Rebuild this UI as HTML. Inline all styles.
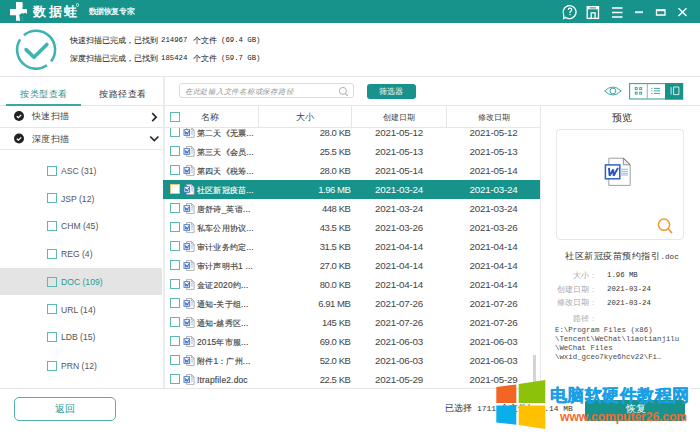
<!DOCTYPE html>
<html><head><meta charset="utf-8">
<style>
*{margin:0;padding:0;box-sizing:border-box}
html,body{width:700px;height:436px;overflow:hidden;background:#fff;font-family:"Liberation Sans",sans-serif;color:#444}
.a{position:absolute}
.t{white-space:nowrap;line-height:1}
.hl{background:#e4e4e4}
.cb{position:absolute;width:10px;height:10px;border:1px solid #5cb8b0;background:#fff}
.row{position:absolute;left:164px;width:376px;height:19px}
.row .cb{left:6px;top:4.2px}
.row .ic{position:absolute;left:18.5px;top:4px}
.row .nm{position:absolute;left:33px;top:6.2px;font-size:8.4px;letter-spacing:0.2px;color:#444;-webkit-text-stroke:0.15px #444}
.row.sel .nm{-webkit-text-stroke:0.15px #fff}
.row .sz{position:absolute;right:189.6px;top:5.3px;font-size:9.5px;letter-spacing:-0.45px;color:#444}
.row .d1{position:absolute;left:199px;width:72px;text-align:center;top:4.7px;font-size:9.8px;letter-spacing:-0.21px;color:#444}
.row .d2{position:absolute;left:293.5px;width:72px;text-align:center;top:4.7px;font-size:9.8px;letter-spacing:-0.21px;color:#444}
.row.sel{background:#17938c;height:18.7px;left:163px;width:377px;padding-left:1px}
.row.sel > *{margin-left:1px}
.row.sel .nm,.row.sel .sz,.row.sel .d1,.row.sel .d2{color:#fff}
.vl{position:absolute;background:#e6e6e6;width:1px}
.hz{position:absolute;background:#e6e6e6;height:1px}
.mono{font-family:"Liberation Mono",monospace}
</style></head><body>
<!-- header -->
<div class="a" style="left:0;top:0;width:700px;height:23px;background:#17938c"></div>
<svg class="a" style="left:9px;top:1px" width="20" height="21" viewBox="0 0 20 21">
 <path d="M7 1.1h6.4v6.9h4.6v6.2h-4.6v5.6H7v-5.6H1V8h6z" fill="#fff"/>
 <path d="M11.4 21l-1.2-7.1 2.8-1.9 1.6.8 1.7-1.4 2.8 2.8v1h-5.5v5.8z" fill="#17938c"/>
 <path d="M13.6 2.5v3.8" stroke="#bfe3df" stroke-width="0.8"/>
</svg>
<div class="a t" style="left:33px;top:5px;font-size:13.2px;font-weight:bold;color:#fff;letter-spacing:2.6px">数据蛙</div>
<div class="a" style="left:75.5px;top:3px;width:3.5px;height:3.5px;border-radius:50%;border:0.8px solid #bfe"></div>
<div class="a t" style="left:88.5px;top:8.3px;font-size:8.2px;letter-spacing:-0.35px;color:#fff;-webkit-text-stroke:0.2px #fff">数据恢复专家</div>
<svg class="a" style="left:560px;top:3px" width="130" height="18" viewBox="560 3 130 18">
 <g fill="none" stroke="#fff" stroke-width="1.3">
  <path d="M565.6 17.2 A6.5 6.5 0 1 0 563.6 14.6 L563.7 18.6 Z"/>
  <path d="M568.3 9.9q0-1.8 1.7-1.8t1.7 1.7q0 1-1 1.5q-.7.4-.7 1.3v.5" stroke-width="1.2"/>
  <rect x="587.2" y="6.7" width="11.3" height="11.7"/>
  <path d="M591.2 18.4v-5.6h3.9v5.6"/>
 </g>
 <path d="M587.2 6.3h11.3v3h-11.3z" fill="#fff"/>
 <path d="M589.6 7.4h6.5v1h-6.5z" fill="#17938c"/>
 <circle cx="570" cy="14.4" r="0.75" fill="#fff"/>
 <g fill="none" stroke="#fff" stroke-width="1.3">
  <path d="M612 8h10.5M612 12.5h10.5M612 17h10.5"/>
  <path d="M656.5 10h8.5v5h-8.5z" />
  <path d="M678.5 8.3l8 7.7M686.5 8.3l-8 7.7" stroke-width="1.4"/>
 </g>
 <path d="M656.5 10.3h8.5" stroke="#fff" stroke-width="1.8"/>
 <path d="M635 12.2h8" stroke="#d8eeee" stroke-width="2"/>
</svg>

<!-- scan info -->
<svg class="a" style="left:13px;top:27px" width="46" height="46" viewBox="0 0 46 46">
 <g fill="none" stroke="#3fb3b1" stroke-width="2.6">
  <path d="M34 38.26 A19 19 0 0 1 7.17 12.35"/>
  <path d="M10.89 8.15 A19 19 0 0 1 38.07 34.4"/>
 </g>
 <path d="M13.1 22.6l7.9 7.7 12.9-12.9" fill="none" stroke="#3fb3b1" stroke-width="3.6" stroke-linecap="round" stroke-linejoin="round"/>
</svg>
<div class="a t" style="left:70px;top:36.2px;font-size:8.3px;color:#2a2a2a;-webkit-text-stroke:0.06px #2a2a2a">快速扫描已完成，已找到</div>
<div class="a t mono" style="left:161px;top:37px;font-size:7.3px;color:#222">214967</div>
<div class="a t" style="left:193px;top:36.2px;font-size:8.3px;color:#2a2a2a;-webkit-text-stroke:0.06px #2a2a2a">个文件</div>
<div class="a t mono" style="left:221px;top:37px;font-size:7.3px;color:#222">(69.4 GB)</div>
<div class="a t" style="left:70px;top:54.2px;font-size:8.3px;color:#2a2a2a;-webkit-text-stroke:0.06px #2a2a2a">深度扫描已完成，已找到</div>
<div class="a t mono" style="left:161px;top:55px;font-size:7.3px;color:#222">185424</div>
<div class="a t" style="left:193px;top:54.2px;font-size:8.3px;color:#2a2a2a;-webkit-text-stroke:0.06px #2a2a2a">个文件</div>
<div class="a t mono" style="left:221px;top:55px;font-size:7.3px;color:#222">(59.7 GB)</div>

<!-- main lines -->
<div class="hz" style="left:0;top:76px;width:700px"></div>
<div class="hz" style="left:0;top:105px;width:700px"></div>
<div class="hz" style="left:164px;top:127px;width:376px"></div>
<div class="hz" style="left:0;top:127px;width:164px"></div>
<div class="hz" style="left:0;top:148.5px;width:164px"></div>
<div class="hz" style="left:0;top:387.5px;width:700px"></div>
<div class="vl" style="left:163px;top:76px;height:312px;width:2px;background:#ebebeb"></div>
<div class="vl" style="left:540px;top:105px;height:283px"></div>

<!-- tabs -->
<div class="a t" style="left:20px;top:89.3px;font-size:9.4px;letter-spacing:0.5px;color:#1f918b">按类型查看</div>
<div class="a t" style="left:99px;top:89.3px;font-size:9.4px;letter-spacing:0.5px;color:#333">按路径查看</div>
<div class="a" style="left:6px;top:104px;width:75px;height:2px;background:#3aa9a4"></div>

<!-- left scan rows -->
<svg class="a" style="left:13px;top:110px" width="12" height="40" viewBox="0 0 12 40">
 <circle cx="6" cy="6" r="5" fill="#222"/><path d="M3.8 6.2l1.6 1.5 2.8-2.8" fill="none" stroke="#fff" stroke-width="1.3"/>
 <circle cx="6" cy="28.5" r="5" fill="#222"/><path d="M3.8 28.7l1.6 1.5 2.8-2.8" fill="none" stroke="#fff" stroke-width="1.3"/>
</svg>
<div class="a t" style="left:32px;top:112px;font-size:9.3px;letter-spacing:0.3px;color:#444">快速扫描</div>
<div class="a t" style="left:32px;top:134.5px;font-size:9.3px;letter-spacing:0.3px;color:#444">深度扫描</div>
<svg class="a" style="left:148px;top:110px" width="12" height="40" viewBox="0 0 12 40">
 <path d="M4.2 3.2l4 4-4 4" fill="none" stroke="#2a2a2a" stroke-width="1.7"/>
 <path d="M2.2 26.5l4.1 4.1 4.1-4.1" fill="none" stroke="#2a2a2a" stroke-width="1.7"/>
</svg>

<!-- file type list -->
<div class="a hl" style="left:0;top:268px;width:162px;height:27px"></div>
<div class="cb" style="left:47px;top:165.5px;"></div><div class="a t" style="left:61px;top:166.8px;font-size:8.6px;color:#555">ASC (31)</div>
<div class="cb" style="left:47px;top:193.3px;"></div><div class="a t" style="left:61px;top:194.60000000000002px;font-size:8.6px;color:#555">JSP (12)</div>
<div class="cb" style="left:47px;top:221px;"></div><div class="a t" style="left:61px;top:222.3px;font-size:8.6px;color:#555">CHM (45)</div>
<div class="cb" style="left:47px;top:248.8px;"></div><div class="a t" style="left:61px;top:250.10000000000002px;font-size:8.6px;color:#555">REG (4)</div>
<div class="cb" style="left:47px;top:276.8px;background:transparent;"></div><div class="a t" style="left:61px;top:278.1px;font-size:8.6px;color:#2a9a94">DOC (109)</div>
<div class="cb" style="left:47px;top:304.3px;"></div><div class="a t" style="left:61px;top:305.6px;font-size:8.6px;color:#555">URL (14)</div>
<div class="cb" style="left:47px;top:332px;"></div><div class="a t" style="left:61px;top:333.3px;font-size:8.6px;color:#555">LDB (15)</div>
<div class="cb" style="left:47px;top:360.5px;"></div><div class="a t" style="left:61px;top:361.8px;font-size:8.6px;color:#555">PRN (12)</div>

<!-- search & filter -->
<div class="a" style="left:179px;top:83.3px;width:174.5px;height:15.2px;border:1px solid #dcdcdc;border-radius:3px"></div>
<div class="a t" style="left:184.8px;top:88.2px;font-size:7.4px;letter-spacing:0.75px;color:#999;font-style:italic">在此处输入文件名称或保存路径</div>
<svg class="a" style="left:338px;top:86px" width="11" height="11" viewBox="0 0 11 11"><circle cx="4.9" cy="4.9" r="3.5" fill="none" stroke="#b0b0b0" stroke-width="1"/><path d="M7.5 7.5l2.3 2.3" stroke="#b0b0b0" stroke-width="1.1"/></svg>
<div class="a" style="left:366.8px;top:83.6px;width:49.3px;height:15px;background:#17938c;border-radius:3px"></div>
<div class="a t" style="left:378.8px;top:87.5px;font-size:8px;color:#fff">筛选器</div>

<!-- right toolbar -->
<svg class="a" style="left:602px;top:82px" width="84" height="19" viewBox="602 82 84 19">
 <path d="M604.6 91q8.3-8 16.6 0q-8.3 8-16.6 0z" fill="none" stroke="#3aa9a4" stroke-width="1"/>
 <circle cx="612.9" cy="91" r="2.9" fill="none" stroke="#3aa9a4" stroke-width="1"/>
 <rect x="629.6" y="83.6" width="53" height="15.4" fill="#fff" stroke="#3aa59f" stroke-width="1.1"/>
 <rect x="665" y="83.1" width="18.1" height="16.4" fill="#17938c"/>
 <path d="M647.3 83.5v15.5" stroke="#7cc4be" stroke-width="1.1"/>
 <g fill="none" stroke="#3a9e98" stroke-width="0.9"><rect x="635.2" y="87.6" width="2" height="2"/><rect x="639.7" y="87.6" width="2" height="2"/><rect x="635.2" y="92.1" width="2" height="2"/><rect x="639.7" y="92.1" width="2" height="2"/></g>
 <path d="M651.2 88.4h1.2M653.9 88.4h6.2M651.2 90.9h1.2M653.9 90.9h6.2M651.2 93.4h1.2M653.9 93.4h6.2" stroke="#2a9a94" stroke-width="0.9"/>
 <path d="M671.1 87v7.6M673.6 87h5.3v7.6h-5.3z" fill="none" stroke="#e8f6f4" stroke-width="0.9"/>
</svg>

<!-- table header -->
<div class="cb" style="left:170px;top:111.8px"></div>
<div class="a t" style="left:201px;top:112.5px;font-size:8.8px;color:#444">名称</div>
<div class="vl" style="left:257.5px;top:105px;height:22px"></div>
<div class="a t" style="left:295.5px;top:112.5px;font-size:8.8px;color:#444">大小</div>
<div class="vl" style="left:351px;top:105px;height:22px"></div>
<div class="a t" style="left:383px;top:112.8px;font-size:8.4px;color:#444">创建日期</div>
<div class="vl" style="left:446px;top:105px;height:22px"></div>
<div class="a t" style="left:477.5px;top:112.8px;font-size:8.4px;color:#444">修改日期</div>

<!-- rows -->
<div class="a" style="left:163px;top:127.5px;width:377px;height:260px;overflow:hidden">
 <div class="a" style="left:-163px;top:-127.5px;width:700px;height:436px">
<div class="row" style="top:123px"><div class="cb"></div><svg class="ic" width="12" height="12" viewBox="0 0 12 12"><path d="M3.6 .6h5l2.5 2.5v7.3h-7.5z" fill="#fff" stroke="#a0a0a0" stroke-width=".8"/><path d="M8.6 .6v2.5h2.5" fill="none" stroke="#999" stroke-width=".7"/><rect x="1" y="2.7" width="5.6" height="5.6" fill="#fff" stroke="#3d70cc" stroke-width=".9"/><path d="M2 3.9l.9 3.4.9-2.2.9 2.2.9-3.4" fill="none" stroke="#2a5ec0" stroke-width=".9"/><path d="M7.8 4.6h2.2M7.8 5.9h2.2M7.8 7.2h2.2" stroke="#8ab2e6" stroke-width=".6"/></svg><div class="nm t">第二天《无票...</div><div class="sz t">28.0 KB</div><div class="d1 t">2021-05-12</div><div class="d2 t">2021-05-12</div></div>
<div class="row" style="top:142px"><div class="cb"></div><svg class="ic" width="12" height="12" viewBox="0 0 12 12"><path d="M3.6 .6h5l2.5 2.5v7.3h-7.5z" fill="#fff" stroke="#a0a0a0" stroke-width=".8"/><path d="M8.6 .6v2.5h2.5" fill="none" stroke="#999" stroke-width=".7"/><rect x="1" y="2.7" width="5.6" height="5.6" fill="#fff" stroke="#3d70cc" stroke-width=".9"/><path d="M2 3.9l.9 3.4.9-2.2.9 2.2.9-3.4" fill="none" stroke="#2a5ec0" stroke-width=".9"/><path d="M7.8 4.6h2.2M7.8 5.9h2.2M7.8 7.2h2.2" stroke="#8ab2e6" stroke-width=".6"/></svg><div class="nm t">第三天《会员...</div><div class="sz t">25.5 KB</div><div class="d1 t">2021-05-13</div><div class="d2 t">2021-05-13</div></div>
<div class="row" style="top:161px"><div class="cb"></div><svg class="ic" width="12" height="12" viewBox="0 0 12 12"><path d="M3.6 .6h5l2.5 2.5v7.3h-7.5z" fill="#fff" stroke="#a0a0a0" stroke-width=".8"/><path d="M8.6 .6v2.5h2.5" fill="none" stroke="#999" stroke-width=".7"/><rect x="1" y="2.7" width="5.6" height="5.6" fill="#fff" stroke="#3d70cc" stroke-width=".9"/><path d="M2 3.9l.9 3.4.9-2.2.9 2.2.9-3.4" fill="none" stroke="#2a5ec0" stroke-width=".9"/><path d="M7.8 4.6h2.2M7.8 5.9h2.2M7.8 7.2h2.2" stroke="#8ab2e6" stroke-width=".6"/></svg><div class="nm t">第四天《税筹...</div><div class="sz t">28.0 KB</div><div class="d1 t">2021-05-14</div><div class="d2 t">2021-05-14</div></div>
<div class="row sel" style="top:180px"><div class="cb" style="border-color:#f3c27a"></div><svg class="ic" width="12" height="12" viewBox="0 0 12 12"><path d="M3.6 .6h5l2.5 2.5v7.3h-7.5z" fill="#fff" stroke="#a0a0a0" stroke-width=".8"/><path d="M8.6 .6v2.5h2.5" fill="none" stroke="#999" stroke-width=".7"/><rect x="1" y="2.7" width="5.6" height="5.6" fill="#fff" stroke="#3d70cc" stroke-width=".9"/><path d="M2 3.9l.9 3.4.9-2.2.9 2.2.9-3.4" fill="none" stroke="#2a5ec0" stroke-width=".9"/><path d="M7.8 4.6h2.2M7.8 5.9h2.2M7.8 7.2h2.2" stroke="#8ab2e6" stroke-width=".6"/></svg><div class="nm t">社区新冠疫苗...</div><div class="sz t">1.96 MB</div><div class="d1 t">2021-03-24</div><div class="d2 t">2021-03-24</div></div>
<div class="row" style="top:199px"><div class="cb"></div><svg class="ic" width="12" height="12" viewBox="0 0 12 12"><path d="M3.6 .6h5l2.5 2.5v7.3h-7.5z" fill="#fff" stroke="#a0a0a0" stroke-width=".8"/><path d="M8.6 .6v2.5h2.5" fill="none" stroke="#999" stroke-width=".7"/><rect x="1" y="2.7" width="5.6" height="5.6" fill="#fff" stroke="#3d70cc" stroke-width=".9"/><path d="M2 3.9l.9 3.4.9-2.2.9 2.2.9-3.4" fill="none" stroke="#2a5ec0" stroke-width=".9"/><path d="M7.8 4.6h2.2M7.8 5.9h2.2M7.8 7.2h2.2" stroke="#8ab2e6" stroke-width=".6"/></svg><div class="nm t">唐舒诗_英语...</div><div class="sz t">448 KB</div><div class="d1 t">2021-03-24</div><div class="d2 t">2021-03-24</div></div>
<div class="row" style="top:218px"><div class="cb"></div><svg class="ic" width="12" height="12" viewBox="0 0 12 12"><path d="M3.6 .6h5l2.5 2.5v7.3h-7.5z" fill="#fff" stroke="#a0a0a0" stroke-width=".8"/><path d="M8.6 .6v2.5h2.5" fill="none" stroke="#999" stroke-width=".7"/><rect x="1" y="2.7" width="5.6" height="5.6" fill="#fff" stroke="#3d70cc" stroke-width=".9"/><path d="M2 3.9l.9 3.4.9-2.2.9 2.2.9-3.4" fill="none" stroke="#2a5ec0" stroke-width=".9"/><path d="M7.8 4.6h2.2M7.8 5.9h2.2M7.8 7.2h2.2" stroke="#8ab2e6" stroke-width=".6"/></svg><div class="nm t">私车公用协议...</div><div class="sz t">43.5 KB</div><div class="d1 t">2021-03-26</div><div class="d2 t">2021-03-26</div></div>
<div class="row" style="top:237px"><div class="cb"></div><svg class="ic" width="12" height="12" viewBox="0 0 12 12"><path d="M3.6 .6h5l2.5 2.5v7.3h-7.5z" fill="#fff" stroke="#a0a0a0" stroke-width=".8"/><path d="M8.6 .6v2.5h2.5" fill="none" stroke="#999" stroke-width=".7"/><rect x="1" y="2.7" width="5.6" height="5.6" fill="#fff" stroke="#3d70cc" stroke-width=".9"/><path d="M2 3.9l.9 3.4.9-2.2.9 2.2.9-3.4" fill="none" stroke="#2a5ec0" stroke-width=".9"/><path d="M7.8 4.6h2.2M7.8 5.9h2.2M7.8 7.2h2.2" stroke="#8ab2e6" stroke-width=".6"/></svg><div class="nm t">审计业务约定...</div><div class="sz t">31.5 KB</div><div class="d1 t">2021-04-14</div><div class="d2 t">2021-04-14</div></div>
<div class="row" style="top:256px"><div class="cb"></div><svg class="ic" width="12" height="12" viewBox="0 0 12 12"><path d="M3.6 .6h5l2.5 2.5v7.3h-7.5z" fill="#fff" stroke="#a0a0a0" stroke-width=".8"/><path d="M8.6 .6v2.5h2.5" fill="none" stroke="#999" stroke-width=".7"/><rect x="1" y="2.7" width="5.6" height="5.6" fill="#fff" stroke="#3d70cc" stroke-width=".9"/><path d="M2 3.9l.9 3.4.9-2.2.9 2.2.9-3.4" fill="none" stroke="#2a5ec0" stroke-width=".9"/><path d="M7.8 4.6h2.2M7.8 5.9h2.2M7.8 7.2h2.2" stroke="#8ab2e6" stroke-width=".6"/></svg><div class="nm t">审计声明书1 ...</div><div class="sz t">27.0 KB</div><div class="d1 t">2021-04-14</div><div class="d2 t">2021-04-14</div></div>
<div class="row" style="top:275px"><div class="cb"></div><svg class="ic" width="12" height="12" viewBox="0 0 12 12"><path d="M3.6 .6h5l2.5 2.5v7.3h-7.5z" fill="#fff" stroke="#a0a0a0" stroke-width=".8"/><path d="M8.6 .6v2.5h2.5" fill="none" stroke="#999" stroke-width=".7"/><rect x="1" y="2.7" width="5.6" height="5.6" fill="#fff" stroke="#3d70cc" stroke-width=".9"/><path d="M2 3.9l.9 3.4.9-2.2.9 2.2.9-3.4" fill="none" stroke="#2a5ec0" stroke-width=".9"/><path d="M7.8 4.6h2.2M7.8 5.9h2.2M7.8 7.2h2.2" stroke="#8ab2e6" stroke-width=".6"/></svg><div class="nm t">金证2020约...</div><div class="sz t">80.0 KB</div><div class="d1 t">2021-04-14</div><div class="d2 t">2021-04-14</div></div>
<div class="row" style="top:294px"><div class="cb"></div><svg class="ic" width="12" height="12" viewBox="0 0 12 12"><path d="M3.6 .6h5l2.5 2.5v7.3h-7.5z" fill="#fff" stroke="#a0a0a0" stroke-width=".8"/><path d="M8.6 .6v2.5h2.5" fill="none" stroke="#999" stroke-width=".7"/><rect x="1" y="2.7" width="5.6" height="5.6" fill="#fff" stroke="#3d70cc" stroke-width=".9"/><path d="M2 3.9l.9 3.4.9-2.2.9 2.2.9-3.4" fill="none" stroke="#2a5ec0" stroke-width=".9"/><path d="M7.8 4.6h2.2M7.8 5.9h2.2M7.8 7.2h2.2" stroke="#8ab2e6" stroke-width=".6"/></svg><div class="nm t">通知-关于组...</div><div class="sz t">6.91 MB</div><div class="d1 t">2021-07-26</div><div class="d2 t">2021-07-26</div></div>
<div class="row" style="top:313px"><div class="cb"></div><svg class="ic" width="12" height="12" viewBox="0 0 12 12"><path d="M3.6 .6h5l2.5 2.5v7.3h-7.5z" fill="#fff" stroke="#a0a0a0" stroke-width=".8"/><path d="M8.6 .6v2.5h2.5" fill="none" stroke="#999" stroke-width=".7"/><rect x="1" y="2.7" width="5.6" height="5.6" fill="#fff" stroke="#3d70cc" stroke-width=".9"/><path d="M2 3.9l.9 3.4.9-2.2.9 2.2.9-3.4" fill="none" stroke="#2a5ec0" stroke-width=".9"/><path d="M7.8 4.6h2.2M7.8 5.9h2.2M7.8 7.2h2.2" stroke="#8ab2e6" stroke-width=".6"/></svg><div class="nm t">通知-越秀区...</div><div class="sz t">145 KB</div><div class="d1 t">2021-07-26</div><div class="d2 t">2021-07-26</div></div>
<div class="row" style="top:332px"><div class="cb"></div><svg class="ic" width="12" height="12" viewBox="0 0 12 12"><path d="M3.6 .6h5l2.5 2.5v7.3h-7.5z" fill="#fff" stroke="#a0a0a0" stroke-width=".8"/><path d="M8.6 .6v2.5h2.5" fill="none" stroke="#999" stroke-width=".7"/><rect x="1" y="2.7" width="5.6" height="5.6" fill="#fff" stroke="#3d70cc" stroke-width=".9"/><path d="M2 3.9l.9 3.4.9-2.2.9 2.2.9-3.4" fill="none" stroke="#2a5ec0" stroke-width=".9"/><path d="M7.8 4.6h2.2M7.8 5.9h2.2M7.8 7.2h2.2" stroke="#8ab2e6" stroke-width=".6"/></svg><div class="nm t">2015年市服...</div><div class="sz t">69.0 KB</div><div class="d1 t">2021-06-03</div><div class="d2 t">2021-06-03</div></div>
<div class="row" style="top:351px"><div class="cb"></div><svg class="ic" width="12" height="12" viewBox="0 0 12 12"><path d="M3.6 .6h5l2.5 2.5v7.3h-7.5z" fill="#fff" stroke="#a0a0a0" stroke-width=".8"/><path d="M8.6 .6v2.5h2.5" fill="none" stroke="#999" stroke-width=".7"/><rect x="1" y="2.7" width="5.6" height="5.6" fill="#fff" stroke="#3d70cc" stroke-width=".9"/><path d="M2 3.9l.9 3.4.9-2.2.9 2.2.9-3.4" fill="none" stroke="#2a5ec0" stroke-width=".9"/><path d="M7.8 4.6h2.2M7.8 5.9h2.2M7.8 7.2h2.2" stroke="#8ab2e6" stroke-width=".6"/></svg><div class="nm t">附件1：广州...</div><div class="sz t">52.0 KB</div><div class="d1 t">2021-06-03</div><div class="d2 t">2021-06-03</div></div>
<div class="row" style="top:370px"><div class="cb"></div><svg class="ic" width="12" height="12" viewBox="0 0 12 12"><path d="M3.6 .6h5l2.5 2.5v7.3h-7.5z" fill="#fff" stroke="#a0a0a0" stroke-width=".8"/><path d="M8.6 .6v2.5h2.5" fill="none" stroke="#999" stroke-width=".7"/><rect x="1" y="2.7" width="5.6" height="5.6" fill="#fff" stroke="#3d70cc" stroke-width=".9"/><path d="M2 3.9l.9 3.4.9-2.2.9 2.2.9-3.4" fill="none" stroke="#2a5ec0" stroke-width=".9"/><path d="M7.8 4.6h2.2M7.8 5.9h2.2M7.8 7.2h2.2" stroke="#8ab2e6" stroke-width=".6"/></svg><div class="nm t">!trapfile2.doc</div><div class="sz t">22.5 KB</div><div class="d1 t">2021-05-29</div><div class="d2 t">2021-05-29</div></div>
 </div>
</div>
<div class="a" style="left:533px;top:355px;width:2.5px;height:27.5px;background:#d4d4d4"></div>

<!-- preview panel -->
<div class="a t" style="left:612px;top:112.5px;font-size:9.6px;color:#333">预览</div>
<div class="a" style="left:555.5px;top:129px;width:128px;height:110.5px;border:1px solid #e8e8e8;border-radius:4px"></div>
<svg class="a" style="left:603px;top:156px" width="30" height="32" viewBox="0 0 30 32">
 <path d="M5.8 2.2h14.6l6.8 6.6v20.6h-21.4z" fill="#fdfdfd" stroke="#a0a0a0" stroke-width="1"/>
 <path d="M20.4 2.2v6.6h6.8" fill="#f0f0f0" stroke="#8a8a8a" stroke-width="0.9"/>
 <path d="M20.6 2.4l6.6 6.4" stroke="#666" stroke-width="1"/>
 <rect x="2.4" y="8.9" width="14.4" height="13.9" fill="#fff" stroke="#2f64c6" stroke-width="1.5"/>
 <path d="M6 11.9l.6 7.8 3.6-6.2.4 6.2 4.4-7.8" fill="none" stroke="#2856b8" stroke-width="1.9" stroke-linejoin="bevel"/>
 <path d="M18.2 13.3h6.8M18.2 15.4h6.8M18.2 17.3h6.8M18.2 19h6.8" stroke="#8ab0e0" stroke-width="0.9"/>
</svg>
<svg class="a" style="left:656.2px;top:217px" width="19" height="19" viewBox="0 0 19 19">
 <circle cx="8" cy="7.7" r="5.6" fill="none" stroke="#f09a2a" stroke-width="1.5"/>
 <path d="M12 11.8l3.6 3.8" stroke="#f09a2a" stroke-width="1.6" stroke-linecap="round"/>
</svg>
<div class="a t" style="left:565px;top:250.5px;font-size:9.4px;color:#333"><span style="letter-spacing:0.55px">社区新冠疫苗预约指引</span><span class="mono" style="font-size:7.6px">.doc</span></div>
<div class="a t" style="left:550px;top:271.5px;width:44px;text-align:right;font-size:7.6px;color:#aaa">大小<span style="margin-left:2.5px">:</span></div>
<div class="a t mono" style="left:607px;top:272px;font-size:7.3px;color:#333">1.96 MB</div>
<div class="a t" style="left:550px;top:285.5px;width:44px;text-align:right;font-size:7.6px;color:#aaa">创建日期<span style="margin-left:2.5px">:</span></div>
<div class="a t mono" style="left:607px;top:286px;font-size:7.3px;color:#333">2021-03-24</div>
<div class="a t" style="left:550px;top:299px;width:44px;text-align:right;font-size:7.6px;color:#aaa">修改日期<span style="margin-left:2.5px">:</span></div>
<div class="a t mono" style="left:607px;top:299.5px;font-size:7.3px;color:#333">2021-03-24</div>
<div class="a t" style="left:550px;top:314.5px;width:44px;text-align:right;font-size:7.6px;color:#aaa">路径<span style="margin-left:2.5px">:</span></div>
<div class="a mono" style="left:555px;top:325.5px;font-size:7.4px;line-height:9.25px;color:#4a4a4a;white-space:pre">E:\Program Files (x86)
\Tencent\WeChat\liaotianjilu
\WeChat Files
\wxid_gceo7kye6hcv22\Fi…</div>

<!-- bottom -->
<div class="a" style="left:14px;top:396.8px;width:101.5px;height:24px;border:1px solid #52b0a8;border-radius:5px"></div>
<div class="a t" style="left:54.5px;top:404px;font-size:9.6px;color:#2a9a94">返回</div>
<div class="a t" style="left:444.5px;top:403.5px;font-size:9.3px;color:#333">已选择</div>
<div class="a t mono" style="left:477px;top:404.5px;font-size:7.9px;color:#333">1711</div>
<div class="a t" style="left:500px;top:403.5px;font-size:9.3px;color:#333">个文件/</div>
<div class="a t mono" style="left:539.5px;top:404.5px;font-size:7.9px;color:#333">1.14 MB</div>
<div class="a" style="left:585px;top:399.5px;width:100px;height:21.5px;background:#17938c;border-radius:3px"></div>
<div class="a t" style="left:626px;top:404px;font-size:9.5px;color:#fff">恢复</div>

<!-- watermark -->
<svg class="a" style="left:490px;top:375px" width="60" height="60" viewBox="490 375 60 60">
 <path d="M496.3 387l20-2.5v18.5h-20z" fill="#f26522"/>
 <path d="M518.7 384.1l26.6-4.2v23.1h-26.6z" fill="#8cc20a"/>
 <path d="M496.3 405.5h20v19.2l-20-2.1z" fill="#0aaeea"/>
 <path d="M518.7 405.5h26.6v23.4l-26.6-3.8z" fill="#ffc000"/>
</svg>
<div class="a" style="left:546px;top:379px;width:145px;height:20px;background:#fff"></div>
<div class="a t" style="left:550px;top:386.5px;font-size:17px;letter-spacing:0.45px;font-weight:bold;color:#1a9fe6;-webkit-text-stroke:0.4px #1a9fe6">电脑软硬件教程网</div>
<div class="a t" style="left:560px;top:410.5px;font-size:12.2px;font-weight:bold;color:#f26a2e;letter-spacing:-0.1px">www.computer26.com</div>
</body></html>
